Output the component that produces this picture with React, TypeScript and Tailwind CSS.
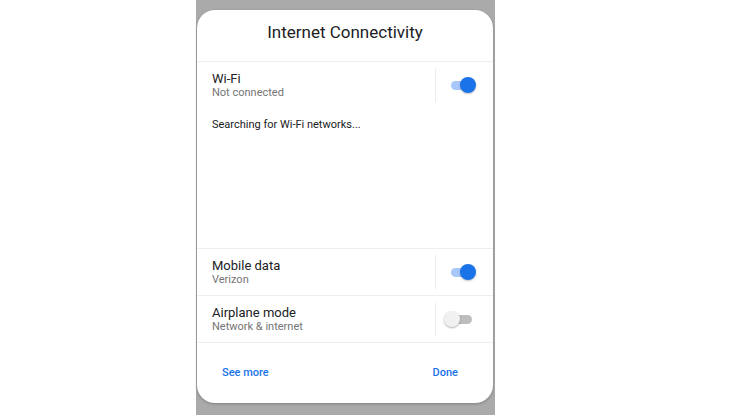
import { ReactNode } from 'react';

function Toggle({ on }: { on: boolean }) {
  return (
    <div className="relative w-[32px] h-[16px]">
      <div
        className={`absolute left-[7px] top-[3.5px] w-[21px] h-[9px] rounded-full ${on ? 'bg-[#a8c7fa]' : 'bg-[#bdbdbd]'}`}
      />
      {on ? (
        <div className="absolute right-0 top-0 w-[16px] h-[16px] rounded-full bg-[#1a73e8] shadow-[0_1px_2px_rgba(0,0,0,0.25)]" />
      ) : (
        <div className="absolute left-0 top-0 w-[16px] h-[16px] rounded-full bg-[#f1f1f1] shadow-[0_1px_2px_rgba(0,0,0,0.3)]" />
      )}
    </div>
  );
}

function SettingRow({ title, subtitle, on, divider }: { title: string; subtitle: string; on: boolean; divider: number }) {
  return (
    <div className="flex items-center h-[46px]">
      <div className="flex-1 pl-[15px] flex flex-col">
        <span className="text-[13px] leading-[15px] text-[#202124]">{title}</span>
        <span className="text-[11px] leading-[14px] text-[#757575]">{subtitle}</span>
      </div>
      <div className="w-px bg-[#ebebeb]" style={{ height: divider }} />
      <div className="w-[57px] flex justify-end pr-[17px]">
        <Toggle on={on} />
      </div>
    </div>
  );
}

function Divider(): ReactNode {
  return <div className="h-px bg-[#eeeeee]" />;
}

export default function App() {
  return (
    <div className="w-[737px] h-[415px] bg-white pl-[196px] font-['Roboto',sans-serif]">
      <div className="w-[299px] h-full bg-[#aaaaaa] pt-[10px] pl-px pr-[2px]">
        <div className="h-[393px] bg-white rounded-[18px] flex flex-col overflow-hidden shadow-[0_1px_3px_rgba(0,0,0,0.25)]">
          <div className="h-[51px] pt-[12px] text-center text-[17px] leading-[20px] text-[#202124]">
            Internet Connectivity
          </div>
          <Divider />

          <SettingRow title="Wi-Fi" subtitle="Not connected" on divider={33} />
          <div className="mt-[10px] pl-[15px] text-[11px] leading-[14px] text-[#202124]">
            Searching for Wi-Fi networks...
          </div>
          <div className="flex-1" />

          <Divider />
          <SettingRow title="Mobile data" subtitle="Verizon" on divider={34} />
          <Divider />
          <SettingRow title="Airplane mode" subtitle="Network & internet" on={false} divider={33} />
          <Divider />

          <div className="h-[60px] flex items-center justify-between pl-[25px] pr-[35px] text-[11px] font-medium text-[#1a73e8]">
            <span>See more</span>
            <span>Done</span>
          </div>
        </div>
      </div>
    </div>
  );
}
